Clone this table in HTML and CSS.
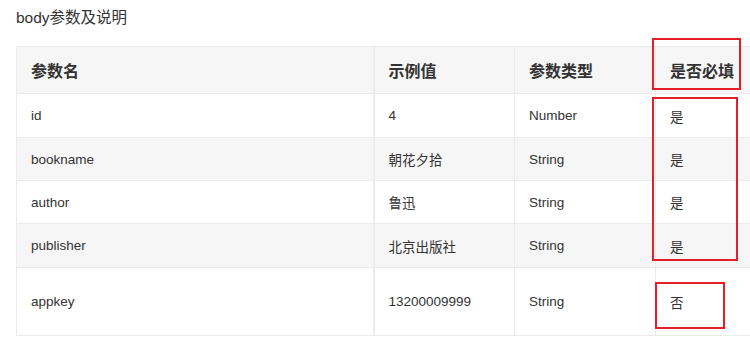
FILE: index.html
```html
<!DOCTYPE html>
<html lang="zh">
<head>
<meta charset="utf-8">
<link rel="stylesheet" href="styles.css">
</head>
<body>
<div class="page">
  <div class="title">body参数及说明</div>
  <div class="table-wrap">
    <table class="params">
      <colgroup>
        <col class="c1"><col class="c2"><col class="c3"><col class="c4">
      </colgroup>
      <thead>
        <tr><th>参数名</th><th>示例值</th><th>参数类型</th><th>是否必填</th></tr>
      </thead>
      <tbody>
        <tr class="wide"><td>id</td><td>4</td><td>Number</td><td>是</td></tr>
        <tr class="alt"><td>bookname</td><td>朝花夕拾</td><td>String</td><td>是</td></tr>
        <tr><td>author</td><td>鲁迅</td><td>String</td><td>是</td></tr>
        <tr class="alt wide"><td>publisher</td><td>北京出版社</td><td>String</td><td>是</td></tr>
        <tr class="tall"><td>appkey</td><td>13200009999</td><td>String</td><td>否</td></tr>
      </tbody>
    </table>
    <div class="mark mark-head"></div>
    <div class="mark mark-yes"></div>
    <div class="mark mark-no"></div>
  </div>
</div>
</body>
</html>
```
FILE: styles.css
```css
html, body {
  margin: 0;
  padding: 0;
  background: #fff;
  overflow: hidden;
}
body {
  font-family: "Liberation Sans", "Noto Sans CJK SC", sans-serif;
  color: #333;
}
.page {
  padding: 8px 0 0 16px;
}
.title {
  font-size: 15.5px;
  line-height: 20px;
  height: 38px;
}
.table-wrap {
  position: relative;
  width: 760px;
}
.params {
  border-collapse: collapse;
  table-layout: fixed;
  width: 760px;
  font-size: 13.5px;
}
.c1 { width: 357px; }
.c2 { width: 141px; }
.c3 { width: 141px; }
.c4 { width: 121px; }
.params th, .params td {
  border: 1px solid #ebebeb;
  padding: 0 0 0 14px;
  text-align: left;
  vertical-align: middle;
}
.params th:first-child, .params td:first-child {
  border-right-width: 2px;
}
.params th {
  background: #f6f6f6;
  font-size: 16px;
  font-weight: bold;
  height: 46px;
  color: #333;
}
.params td {
  height: 42px;
  color: #333;
}
.params tr.wide td {
  height: 43px;
}
.params tr.alt td {
  background: #f6f6f6;
}
.params tr.tall td {
  height: 67px;
}
.mark {
  position: absolute;
  border: 2px solid #e41f2a;
  box-sizing: border-box;
}
.mark-head {
  left: 636px;
  top: -8px;
  width: 89px;
  height: 52px;
}
.mark-yes {
  left: 636px;
  top: 51px;
  width: 86px;
  height: 164px;
}
.mark-no {
  left: 639px;
  top: 236px;
  width: 70px;
  height: 47px;
}
```
